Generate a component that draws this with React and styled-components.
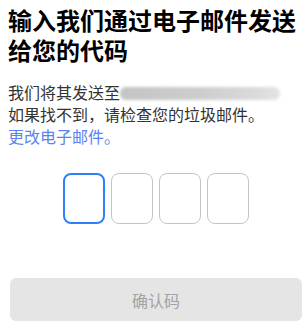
import React from "react";
import styled, { createGlobalStyle } from "styled-components";

const Global = createGlobalStyle`
  html, body { margin: 0; padding: 0; background: #fff; }
  body { font-family: "Noto Sans CJK SC", "Noto Sans", sans-serif; }
  * { box-sizing: border-box; }
`;

const Page = styled.div`
  width: 307px;
  height: 321px;
  overflow: hidden;
  padding: 5px 8px 0 8px;
  display: flex;
  flex-direction: column;
`;

const Title = styled.h1`
  margin: 0;
  font-size: 24px;
  line-height: 30px;
  font-weight: 700;
  color: #000;
  letter-spacing: 0;
`;

const Info = styled.p`
  margin: 16px 0 0 0;
  font-size: 16px;
  line-height: 22px;
  color: #333;
`;

const Blurred = styled.span`
  display: inline-block;
  vertical-align: middle;
  width: 160px;
  height: 13px;
  margin-top: -3px;
  background: linear-gradient(90deg, #c4c4c4 0%, #cdcdcd 50%, #dadada 85%, #e4e4e4 100%);
  filter: blur(1.5px);
  border-radius: 6px;
`;

const Link = styled.a`
  color: #5a82f0;
  text-decoration: none;
  cursor: pointer;
`;

const Codes = styled.div`
  display: flex;
  justify-content: center;
  gap: 6px;
  margin-top: 26px;
  padding-left: 5px;
`;

const CodeBox = styled.div`
  width: 42px;
  height: 51px;
  border-radius: 8px;
  border: ${(p) => (p.$active ? "2px solid #2f80f7" : "1px solid #c4c4c4")};
  background: #fff;
`;

const Submit = styled.button`
  margin-top: 54px;
  margin-left: 2px;
  width: 292px;
  height: 44px;
  border: none;
  border-radius: 6px;
  background: #e5e5e5;
  color: #a2a2a2;
  font-family: "Noto Sans CJK SC", "Noto Sans", sans-serif;
  font-size: 16px;
  padding: 0;
`;

export default function App() {
  return (
    <>
      <Global />
      <Page>
        <Title>输入我们通过电子邮件发送给您的代码</Title>
        <Info>
          我们将其发送至<Blurred aria-label="隐藏的邮箱" />
          <br />
          如果找不到，请检查您的垃圾邮件。
          <br />
          <Link>更改电子邮件。</Link>
        </Info>
        <Codes>
          {[0, 1, 2, 3].map((i) => (
            <CodeBox key={i} $active={i === 0} />
          ))}
        </Codes>
        <Submit disabled>确认码</Submit>
      </Page>
    </>
  );
}
